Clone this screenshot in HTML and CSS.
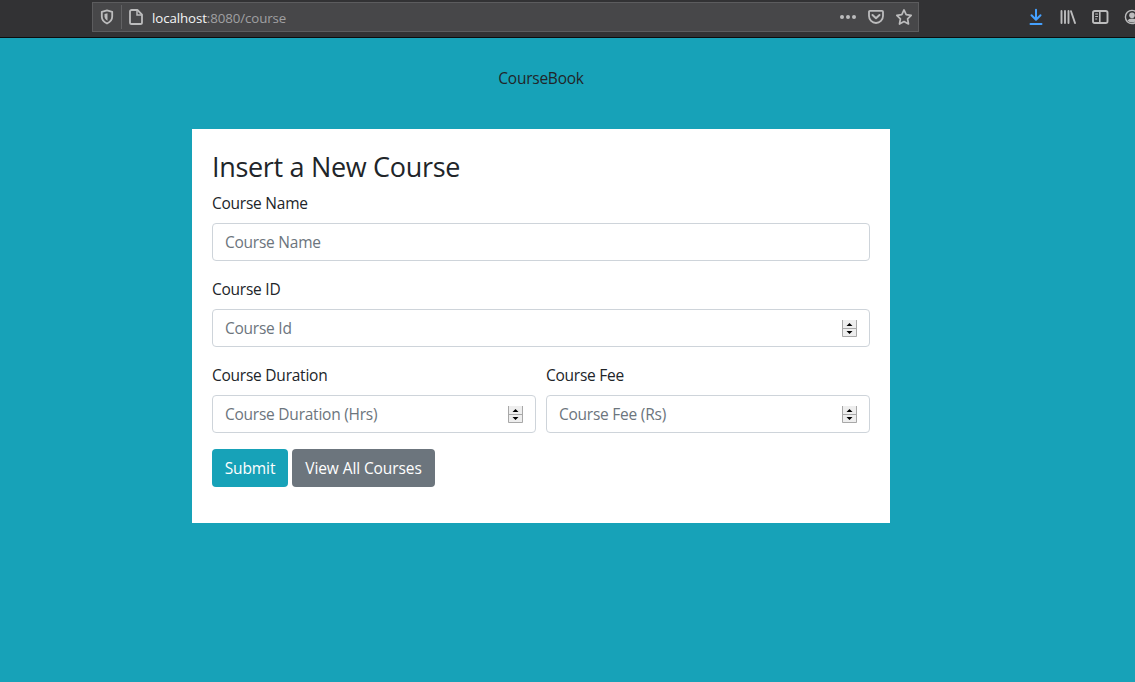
FILE: index.html
```html
<!DOCTYPE html>
<html lang="en">
<head>
<meta charset="utf-8">
<title>CourseBook</title>
<link rel="stylesheet" href="styles.css">
</head>
<body>
<header class="toolbar">
  <div class="address">
    <svg class="icon shield" width="16" height="16" viewBox="0 0 16 16"><path d="M8 1.400 13.200 2.800v4.700c0 3.200-2.200 5.600-5.200 7-3-1.400-5.200-3.800-5.200-7V2.800z" fill="none" stroke="currentColor" stroke-width="1.800" stroke-linejoin="round"/><path d="M8.500 4.300v7.400C6.500 10.400 5.500 9 5.500 7.200V5z" fill="currentColor"/></svg>
    <span class="divider"></span>
    <svg class="icon page" width="16" height="18" viewBox="0 0 16 18"><path d="M3.600 2h5.800L14 6.600v7.800a1.600 1.600 0 0 1-1.600 1.600H3.600A1.600 1.600 0 0 1 2 14.400V3.600A1.600 1.600 0 0 1 3.600 2z" fill="none" stroke="currentColor" stroke-width="1.800" stroke-linejoin="round"/><path d="M9 2v5h5" fill="none" stroke="currentColor" stroke-width="1.500"/></svg>
    <span class="url"><span class="host">localhost</span>:8080/course</span>
    <div class="actions">
      <svg class="icon" width="18" height="18" viewBox="0 0 18 18"><g fill="currentColor"><circle cx="3" cy="9" r="2"/><circle cx="9" cy="9" r="2"/><circle cx="15" cy="9" r="2"/></g></svg>
      <svg class="icon" width="18" height="18" viewBox="0 0 18 18"><path d="M3 2.800h12a1 1 0 0 1 1 1V8a7 7 0 0 1-14 0V3.800a1 1 0 0 1 1-1z" fill="none" stroke="currentColor" stroke-width="1.800"/><path d="M5.500 7 9 10.300 12.500 7" fill="none" stroke="currentColor" stroke-width="2" stroke-linecap="round" stroke-linejoin="round"/></svg>
      <svg class="icon" width="18" height="18" viewBox="0 0 18 18"><path d="m9 1.900 2.200 4.700 5 .7-3.600 3.500.9 5.200L9 13.500 4.500 16l.9-5.200L1.800 7.300l5-.7z" fill="none" stroke="currentColor" stroke-width="1.700" stroke-linejoin="round"/></svg>
    </div>
  </div>
  <div class="tools">
    <svg class="icon download" width="18" height="18" viewBox="0 0 18 18"><path d="M9 1.800v9.500M4.500 7.200 9 11.700l4.500-4.500M3.500 16h11" fill="none" stroke="currentColor" stroke-width="2" stroke-linecap="round" stroke-linejoin="round"/></svg>
    <svg class="icon" width="18" height="18" viewBox="0 0 18 18"><path d="M2.500 3v12M6 3v12M9.500 3v12M12 3.200 16 15" fill="none" stroke="currentColor" stroke-width="1.900" stroke-linecap="round"/></svg>
    <svg class="icon" width="18" height="18" viewBox="0 0 18 18"><rect x="2" y="3" width="14.500" height="12" rx="1.800" fill="none" stroke="currentColor" stroke-width="1.900"/><path d="M8.800 3v12" stroke="currentColor" stroke-width="1.600"/><path d="M4.200 6h2.800M4.200 8.500h2.800M4.200 11h2" stroke="currentColor" stroke-width="1.100"/></svg>
    <svg class="icon" width="18" height="18" viewBox="0 0 18 18"><circle cx="9" cy="9" r="6.600" fill="none" stroke="currentColor" stroke-width="1.400"/><circle cx="9" cy="7.200" r="2.800" fill="currentColor"/><path d="M4.500 12.500Q5.500 10.400 9 10.400t4.500 2.100Q12 14.500 9 14.500t-4.500-2z" fill="currentColor"/></svg>
  </div>
</header>
<main class="content">
  <p class="brand">CourseBook</p>
  <form class="card">
    <h1 class="heading">Insert a New Course</h1>
    <div class="group">
      <label class="label" for="name">Course Name</label>
      <div class="field"><input class="input" id="name" type="text" placeholder="Course Name"></div>
    </div>
    <div class="group">
      <label class="label" for="cid">Course ID</label>
      <div class="field"><input class="input" id="cid" type="text" placeholder="Course Id"><svg class="spinner" width="15" height="17" viewBox="0 0 15 17"><path d="M0 0h15v17H0z" fill="#eee"/><path d="M.5 0v16.500h14V0M0 8.500h15" fill="none" stroke="#a8a8a8"/><path d="M4.500 6h6l-3-3zM4.500 11h6l-3 3z" fill="#000"/></svg></div>
    </div>
    <div class="columns">
      <div class="group">
        <label class="label" for="duration">Course Duration</label>
        <div class="field"><input class="input" id="duration" type="text" placeholder="Course Duration (Hrs)"><svg class="spinner" width="15" height="17" viewBox="0 0 15 17"><path d="M0 0h15v17H0z" fill="#eee"/><path d="M.5 0v16.500h14V0M0 8.500h15" fill="none" stroke="#a8a8a8"/><path d="M4.500 6h6l-3-3zM4.500 11h6l-3 3z" fill="#000"/></svg></div>
      </div>
      <div class="group">
        <label class="label" for="fee">Course Fee</label>
        <div class="field"><input class="input" id="fee" type="text" placeholder="Course Fee (Rs)"><svg class="spinner" width="15" height="17" viewBox="0 0 15 17"><path d="M0 0h15v17H0z" fill="#eee"/><path d="M.5 0v16.500h14V0M0 8.500h15" fill="none" stroke="#a8a8a8"/><path d="M4.500 6h6l-3-3zM4.500 11h6l-3 3z" fill="#000"/></svg></div>
      </div>
    </div>
    <div class="buttons">
      <button class="button submit" type="button">Submit</button>
      <button class="button view" type="button">View All Courses</button>
    </div>
  </form>
</main>
</body>
</html>
```
FILE: styles.css
```css
* { box-sizing: border-box; }
body {
  margin: 0;
  height: 682px;
  overflow: hidden;
  background: #17a2b8;
  color: #212529;
  font: 15.5px/24px "Open Sans", "Noto Sans", sans-serif;
  letter-spacing: -0.24px;
}
.toolbar {
  display: flex;
  height: 38px;
  padding: 2px 0 0 92px;
  background: #323234;
  border-bottom: 1px solid #0c0c0d;
  color: #bcbcbd;
  overflow: hidden;
}
.icon { flex: none; display: block; }
.address {
  display: flex;
  flex: none;
  align-items: center;
  width: 827px;
  height: 30px;
  padding: 0 5px 0 6px;
  background: #474749;
  border: 1px solid #5c5c5e;
}
.divider { width: 1px; height: 24px; margin: 0 6px; background: #626264; }
.url {
  margin-left: 8px;
  padding-top: 2px;
  font-size: 13.3px;
  letter-spacing: -0.1px;
  color: #a0a0a2;
}
.host { color: #f4f4f5; }
.actions { display: flex; gap: 10px; margin-left: auto; }
.tools { display: flex; flex: none; gap: 14px; margin: 6px 0 0 108px; }
.download { color: #45a1ff; }
.content { width: 1082px; padding-top: 28px; }
.brand { margin: 0 0 39px; text-align: center; }
.card {
  width: 698px;
  height: 394px;
  margin: 0 auto;
  padding: 20px;
  background: #fff;
}
.heading {
  margin: 0 0 7px;
  padding-top: 1px;
  font-size: 27px;
  font-weight: 400;
  line-height: 34px;
  letter-spacing: -0.32px;
}
.group { margin-bottom: 16px; }
.label { display: block; margin-bottom: 8px; }
.field {
  display: flex;
  align-items: center;
  height: 38px;
  padding: 0 12px;
  border: 1px solid #ced4da;
  border-radius: 4px;
}
.input {
  flex: 1;
  min-width: 0;
  padding: 0;
  border: 0;
  outline: 0;
  background: none;
  font: inherit;
  letter-spacing: inherit;
}
.input::placeholder { color: #6c757d; opacity: 1; }
.spinner { flex: none; }
.columns { display: grid; grid-template-columns: 1fr 1fr; gap: 10px; }
.buttons { display: flex; gap: 4px; }
.button {
  height: 38px;
  padding: 0;
  border: 0;
  border-radius: 4px;
  color: #fff;
  font: inherit;
  letter-spacing: -0.1px;
  white-space: nowrap;
}
.submit { width: 76px; background: #17a2b8; }
.view { width: 143px; background: #6c757d; }
```
